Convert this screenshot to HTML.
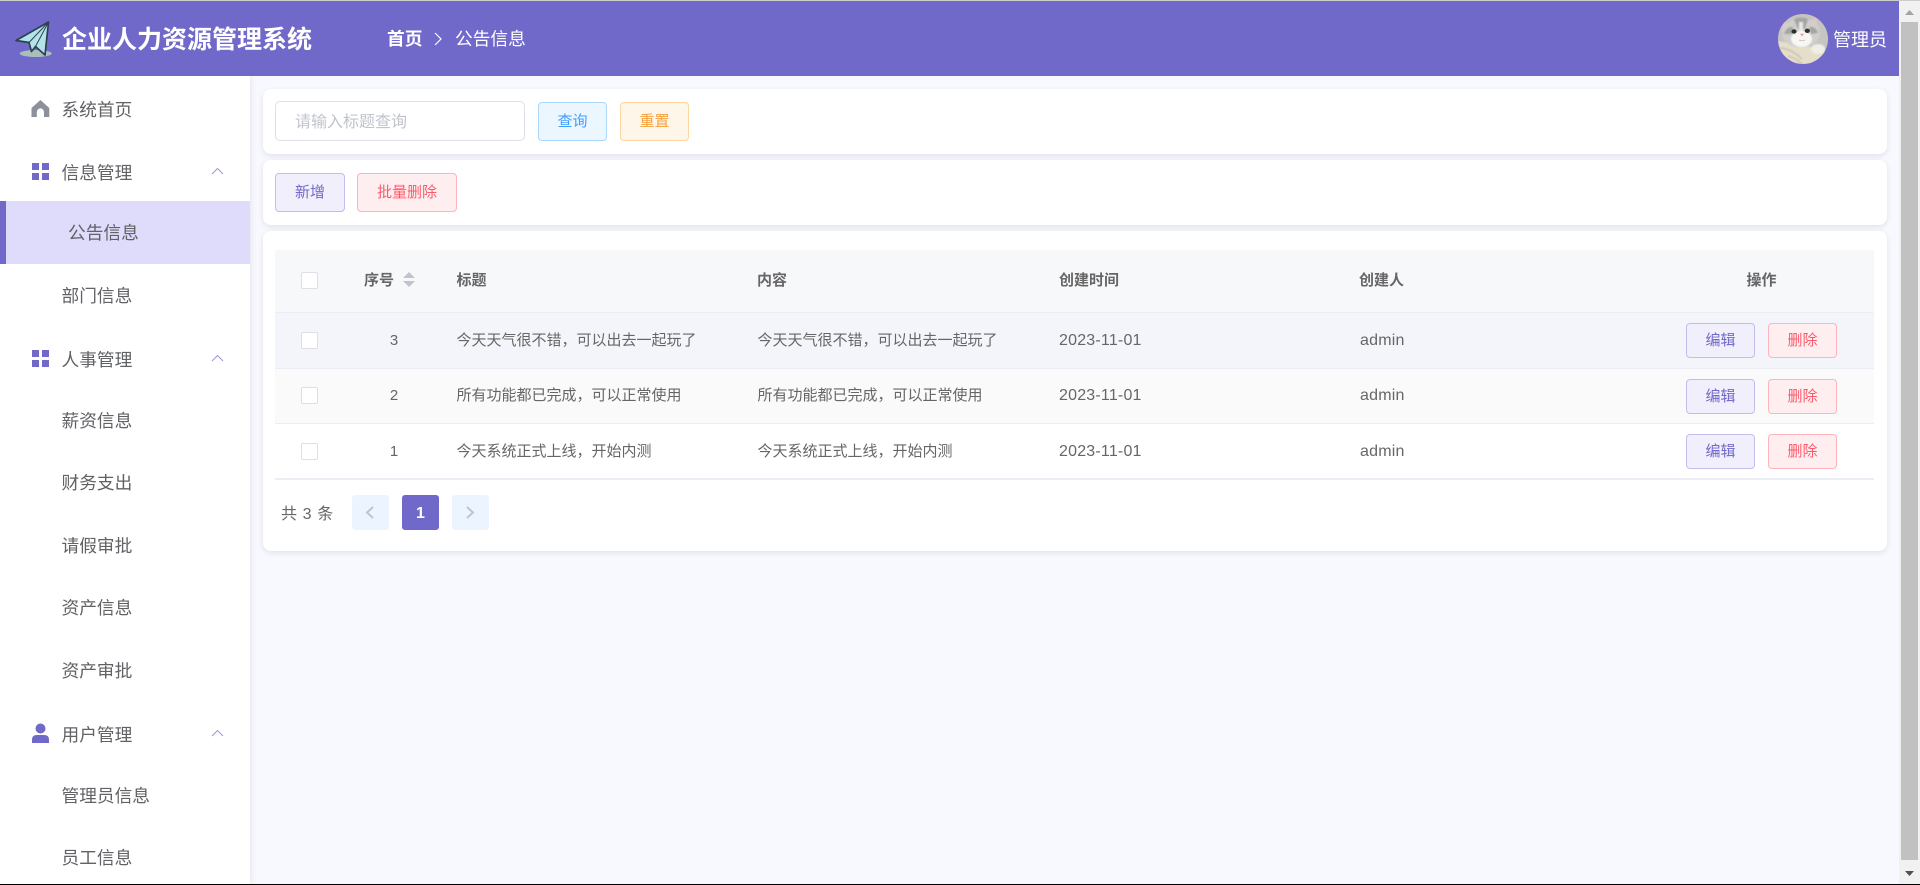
<!DOCTYPE html>
<html lang="zh-CN">
<head>
<meta charset="utf-8">
<title>企业人力资源管理系统</title>
<style>
html,body{margin:0;padding:0;width:1920px;height:885px;overflow:hidden;background:#f8f9fe;}
body{position:relative;font-family:"Liberation Sans","Noto Sans CJK SC",sans-serif;color:#606266;}
div,svg{position:absolute;box-sizing:border-box;}
.t{white-space:nowrap;height:24px;line-height:24px;}
.m{font-size:17.7px;left:61.5px;color:#606266;}
.card{background:#fff;border-radius:8px;box-shadow:0 2px 6px rgba(70,70,110,.13);}
.b{text-align:center;border-radius:4px;border:1px solid;font-size:15px;white-space:nowrap;}
.bh{height:39px;line-height:37px;}
.bt{width:69px;height:35px;line-height:33px;}
.p{background:#f1effb;border-color:#c3bdec;color:#7169c9;}
.d{background:#ffeef0;border-color:#ffb3ba;color:#fb5a6a;}
.i{background:#ecf6ff;border-color:#aad8fb;color:#409eff;}
.w{background:#fff6ea;border-color:#fdd6a4;color:#f8a13c;}
.c{width:17px;height:17px;background:#fff;border:1px solid #dcdfe6;border-radius:2px;}
.h{font-size:15px;font-weight:bold;color:#666;}
.r{font-size:15px;color:#666;}
.l{font-size:16px;letter-spacing:.2px;color:#666;}
.n{font-size:15px;width:40px;text-align:center;left:374px;color:#666;}
.pg{top:495px;width:37px;height:35px;border-radius:3px;background:#ecf5ff;}
</style>
</head>
<body>
<!-- header -->
<div style="left:0;top:0;width:1920px;height:1px;background:#cdcdcd;"></div>
<div style="left:0;top:1px;width:1899px;height:75px;background:#7169c9;"></div>
<svg style="left:12px;top:18px;" width="42" height="42" viewBox="12 18 42 42">
  <ellipse cx="35.7" cy="53.5" rx="16" ry="3.5" fill="#a9bfbc"/>
  <path d="M48.5 22 L16 40.5 L29 42.5 L31.5 51.5 L35.5 46.5 L45 55 Z" fill="#b2e4ea" stroke="#2e4050" stroke-width="1.7" stroke-linejoin="round"/>
  <path d="M48.5 22 L29 42.5 M48.5 22 L35.5 46.5 L31.5 51.5" fill="none" stroke="#2e4050" stroke-width="1"/>
</svg>
<div class="t" style="left:62px;top:25px;height:30px;line-height:30px;font-size:25px;font-weight:bold;color:#fff;">企业人力资源管理系统</div>
<div class="t" style="left:387px;top:27px;font-size:17.7px;font-weight:bold;color:#fff;">首页</div>
<svg style="left:433px;top:32px;" width="10" height="14" viewBox="0 0 10 14"><path d="M2 1 L8 7 L2 13" fill="none" stroke="#fff" stroke-width="1.2"/></svg>
<div class="t" style="left:455px;top:27px;font-size:17.7px;color:#fff;">公告信息</div>
<svg style="left:1778px;top:14px;" width="50" height="50" viewBox="0 0 50 50">
  <defs>
    <clipPath id="cc"><circle cx="25" cy="25" r="25"/></clipPath>
    <filter id="bl"><feGaussianBlur stdDeviation="0.8"/></filter>
  </defs>
  <g clip-path="url(#cc)">
    <rect width="50" height="50" fill="#c5c5c2"/>
    <g filter="url(#bl)">
      <path d="M0 27 L0 50 L50 50 L50 38 L34 33 L18 30 Z" fill="#e4decb"/>
      <path d="M4 18 L5 8 L13 11 Z M31 9 L38 3 L40 15 Z" fill="#e8c4c4"/>
      <ellipse cx="23" cy="19" rx="19" ry="14.5" fill="#cfcfcd"/>
      <path d="M16 5 Q23 2 30 5 L27 15 L20 15 Z" fill="#a5a5a4"/>
      <path d="M6 20 Q9 12 15 13 L14 20 Z M31 13 Q38 12 40 19 L33 20 Z" fill="#a4a4a2"/>
      <path d="M21 8 H25 L25 18 H21 Z" fill="#e8e8e6"/>
      <ellipse cx="23.5" cy="25" rx="10.5" ry="8" fill="#f8f7f4"/>
      <ellipse cx="40" cy="35" rx="7" ry="5" fill="#f0eee4"/>
      <path d="M2 34 Q14 35 24 45 M10 42 Q18 44 24 50 M0 41 Q8 44 12 50" stroke="#c9c2a8" fill="none" stroke-width="1.4"/>
    </g>
    <ellipse cx="16" cy="17.5" rx="2.6" ry="2.2" fill="#303032"/>
    <ellipse cx="29.3" cy="16.8" rx="2.6" ry="2.2" fill="#303032"/>
    <path d="M22 19.8 H26 L24 22.4 Z" fill="#e39aa4"/>
    <path d="M21 26 Q24 27.5 27 26" stroke="#cbbcb8" fill="none" stroke-width=".8"/>
  </g>
</svg>
<div class="t" style="left:1833px;top:28px;font-size:18px;color:#fff;">管理员</div>

<!-- sidebar -->
<div style="left:0;top:76px;width:250px;height:808px;background:#fff;box-shadow:1px 0 6px rgba(90,90,150,.12);"></div>
<div style="left:0;top:201px;width:250px;height:63px;background:#dfdbfb;"></div>
<div style="left:0;top:201px;width:6px;height:63px;background:#7169c9;"></div>

<svg style="left:30px;top:99px;" width="21" height="19" viewBox="30 99 21 19"><path d="M40.4 100 L49.3 108 V117 H44 V112 A3.6 3.6 0 0 0 36.8 112 V117 H31.5 V108 Z" fill="#8b909b"/></svg>
<div class="t m" style="top:98px;">系统首页</div>

<svg style="left:32px;top:163px;" width="17" height="17" viewBox="0 0 17 17"><path d="M0 0h7v7H0zM10 0h7v7h-7zM0 10h7v7H0zM10 10h7v7h-7z" fill="#7169c9"/></svg>
<div class="t m" style="top:161px;">信息管理</div>
<svg style="left:211px;top:167px;" width="13" height="8" viewBox="0 0 13 8"><path d="M1 7 L6.5 1.5 L12 7" fill="none" stroke="#9d97da" stroke-width="1"/></svg>

<div class="t m" style="top:221px;left:68px;">公告信息</div>
<div class="t m" style="top:284px;">部门信息</div>

<svg style="left:32px;top:350px;" width="17" height="17" viewBox="0 0 17 17"><path d="M0 0h7v7H0zM10 0h7v7h-7zM0 10h7v7H0zM10 10h7v7h-7z" fill="#7169c9"/></svg>
<div class="t m" style="top:348px;">人事管理</div>
<svg style="left:211px;top:354px;" width="13" height="8" viewBox="0 0 13 8"><path d="M1 7 L6.5 1.5 L12 7" fill="none" stroke="#9d97da" stroke-width="1"/></svg>

<div class="t m" style="top:409px;">薪资信息</div>
<div class="t m" style="top:471px;">财务支出</div>
<div class="t m" style="top:534px;">请假审批</div>
<div class="t m" style="top:596px;">资产信息</div>
<div class="t m" style="top:659px;">资产审批</div>

<svg style="left:31px;top:723px;" width="19" height="21" viewBox="0 0 19 21"><circle cx="9.5" cy="5.5" r="5" fill="#7169c9"/><path d="M1 20 V16.5 Q1 12 6 12 H13 Q18 12 18 16.5 V20 Z" fill="#7169c9"/></svg>
<div class="t m" style="top:723px;">用户管理</div>
<svg style="left:211px;top:729px;" width="13" height="8" viewBox="0 0 13 8"><path d="M1 7 L6.5 1.5 L12 7" fill="none" stroke="#9d97da" stroke-width="1"/></svg>

<div class="t m" style="top:784px;">管理员信息</div>
<div class="t m" style="top:846px;">员工信息</div>

<!-- card 1 -->
<div class="card" style="left:263px;top:89px;width:1624px;height:65px;"></div>
<div style="left:275px;top:101px;width:250px;height:40px;background:#fff;border:1px solid #dcdfe6;border-radius:5px;"></div>
<div class="t" style="left:295px;top:111px;font-size:16px;color:#c0c4cc;">请输入标题查询</div>
<div class="b bh i" style="left:538px;top:102px;width:69px;">查询</div>
<div class="b bh w" style="left:620px;top:102px;width:69px;">重置</div>

<!-- card 2 -->
<div class="card" style="left:263px;top:160px;width:1624px;height:65px;"></div>
<div class="b bh p" style="left:275px;top:173px;width:70px;">新增</div>
<div class="b bh d" style="left:357px;top:173px;width:100px;">批量删除</div>

<!-- card 3 -->
<div class="card" style="left:263px;top:231px;width:1624px;height:320px;"></div>
<div style="left:275px;top:250px;width:1599px;height:62px;background:#f7f8fa;"></div>
<div style="left:275px;top:312px;width:1599px;height:56px;background:#f4f5fb;"></div>
<div style="left:275px;top:368px;width:1599px;height:55px;background:#fafafa;"></div>
<div style="left:275px;top:312px;width:1599px;height:1px;background:#ebeef5;"></div>
<div style="left:275px;top:368px;width:1599px;height:1px;background:#ebeef5;"></div>
<div style="left:275px;top:423px;width:1599px;height:1px;background:#ebeef5;"></div>
<div style="left:275px;top:478px;width:1599px;height:2px;background:#ebeef5;"></div>

<div class="c" style="left:301px;top:272px;"></div>
<div class="t h" style="left:364px;top:269px;">序号</div>
<svg style="left:403px;top:272px;" width="12" height="15" viewBox="0 0 12 15"><path d="M6 0 L12 6 H0 Z M0 9 H12 L6 15 Z" fill="#c0c4cc"/></svg>
<div class="t h" style="left:456.5px;top:269px;">标题</div>
<div class="t h" style="left:757px;top:269px;">内容</div>
<div class="t h" style="left:1059px;top:269px;">创建时间</div>
<div class="t h" style="left:1359px;top:269px;">创建人</div>
<div class="t h" style="left:1746.5px;top:269px;">操作</div>

<div class="c" style="left:301px;top:332px;"></div>
<div class="t n" style="top:329px;">3</div>
<div class="t r" style="left:456.5px;top:329px;">今天天气很不错，可以出去一起玩了</div>
<div class="t r" style="left:757.5px;top:329px;">今天天气很不错，可以出去一起玩了</div>
<div class="t l" style="left:1059px;top:329px;">2023-11-01</div>
<div class="t l" style="left:1360px;top:329px;">admin</div>
<div class="b bt p" style="left:1686px;top:323px;">编辑</div>
<div class="b bt d" style="left:1768px;top:323px;">删除</div>

<div class="c" style="left:301px;top:387px;"></div>
<div class="t n" style="top:384px;">2</div>
<div class="t r" style="left:456.5px;top:384px;">所有功能都已完成，可以正常使用</div>
<div class="t r" style="left:757.5px;top:384px;">所有功能都已完成，可以正常使用</div>
<div class="t l" style="left:1059px;top:384px;">2023-11-01</div>
<div class="t l" style="left:1360px;top:384px;">admin</div>
<div class="b bt p" style="left:1686px;top:379px;">编辑</div>
<div class="b bt d" style="left:1768px;top:379px;">删除</div>

<div class="c" style="left:301px;top:443px;"></div>
<div class="t n" style="top:440px;">1</div>
<div class="t r" style="left:456.5px;top:440px;">今天系统正式上线，开始内测</div>
<div class="t r" style="left:757.5px;top:440px;">今天系统正式上线，开始内测</div>
<div class="t l" style="left:1059px;top:440px;">2023-11-01</div>
<div class="t l" style="left:1360px;top:440px;">admin</div>
<div class="b bt p" style="left:1686px;top:434px;">编辑</div>
<div class="b bt d" style="left:1768px;top:434px;">删除</div>

<!-- pagination -->
<div class="t" style="left:281px;top:503px;font-size:16px;word-spacing:1.2px;color:#666;">共 3 条</div>
<div class="pg" style="left:352px;"></div>
<svg style="left:365px;top:506px;" width="10" height="13" viewBox="0 0 10 13"><path d="M8 1 L2 6.5 L8 12" fill="none" stroke="#c0c4cc" stroke-width="2"/></svg>
<div class="pg" style="left:402px;background:#7169c9;color:#fff;font-size:16px;font-weight:bold;text-align:center;line-height:37px;">1</div>
<div class="pg" style="left:452px;"></div>
<svg style="left:465px;top:506px;" width="10" height="13" viewBox="0 0 10 13"><path d="M2 1 L8 6.5 L2 12" fill="none" stroke="#c0c4cc" stroke-width="2"/></svg>

<!-- scrollbar -->
<div style="left:1899px;top:1px;width:21px;height:883px;background:#f1f1f1;"></div>
<div style="left:1901px;top:22px;width:17px;height:838px;background:#c1c1c1;"></div>
<svg style="left:1905px;top:10px;" width="9" height="5" viewBox="0 0 9 5"><path d="M4.5 0 L9 5 H0 Z" fill="#a3a3a3"/></svg>
<svg style="left:1905px;top:871px;" width="9" height="5" viewBox="0 0 9 5"><path d="M0 0 H9 L4.5 5 Z" fill="#505050"/></svg>
<div style="left:0;top:884px;width:1920px;height:1px;background:#000;"></div>
</body>
</html>
